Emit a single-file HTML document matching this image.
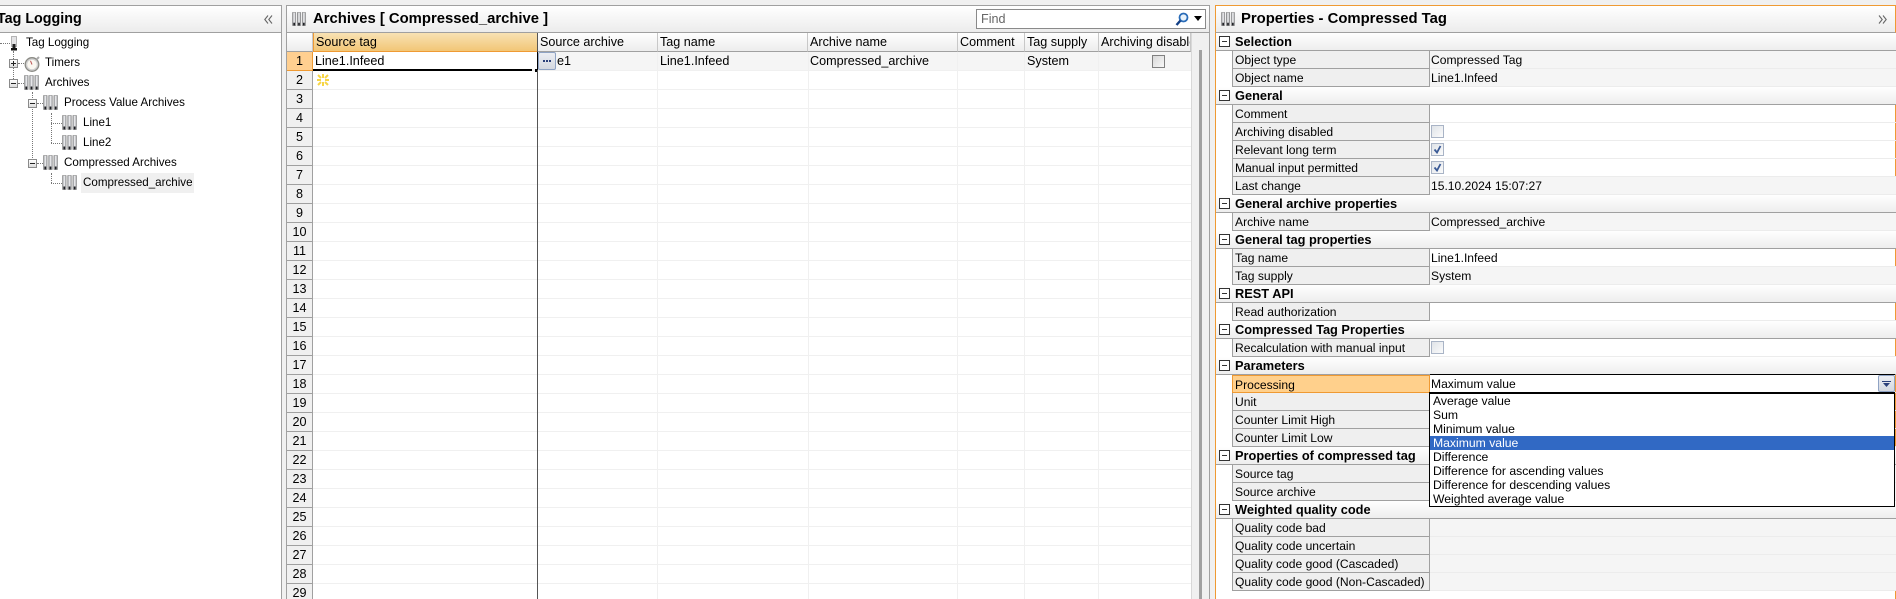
<!DOCTYPE html>
<html><head><meta charset="utf-8"><title>Tag Logging</title>
<style>
html,body{margin:0;padding:0;background:#f0f0f0;width:1896px;height:599px;overflow:hidden}
#r{position:relative;width:1896px;height:599px;overflow:hidden;font-family:"Liberation Sans",sans-serif;color:#000}
div,span,svg{box-sizing:border-box}
.a{position:absolute}
.t{position:absolute;white-space:nowrap;font-size:11.6px;line-height:20px;height:20px}
.hd{position:absolute;top:5px;height:28px;background:linear-gradient(#fff,#ececec);border:1px solid #a0a0a0}
.ttl{position:absolute;top:5px;height:28px;line-height:28px;font-weight:bold;font-size:14.85px;white-space:nowrap}
.g{position:absolute;font-size:12.6px;line-height:19px;height:19px;white-space:nowrap}
.ch{position:absolute;top:33px;height:19px;background:linear-gradient(#fff,#ededed);border-bottom:1px solid #a0a0a0;border-right:1px solid #c8c8c8;font-size:12.6px;line-height:18px;padding-left:3px;white-space:nowrap;overflow:hidden}
.rh{height:19px;background:#f0f0f0;border-bottom:1px solid #a0a0a0;border-right:1px solid #a0a0a0;text-align:center;font-size:12.6px;line-height:19px}
.vl{position:absolute;top:52px;height:547px;width:1px;background:#f0f0f0}
.pr{position:relative;height:18px;font-size:12.1px;line-height:18px;white-space:nowrap}
.gp{background:linear-gradient(#fff,#eeeeee);border-bottom:1px solid #a0a0a0;font-weight:bold;padding-left:19px;font-size:12.8px;line-height:17px}
.gp:before{content:"";position:absolute;left:3px;top:3px;width:9px;height:9px;border:1px solid #333;background:linear-gradient(90deg,#333,#333) center/5px 1px no-repeat #fff}
.lb{position:absolute;left:16px;top:0;width:198px;height:18px;background:#efefef;border-left:1px solid #a0a0a0;border-right:1px solid #a0a0a0;border-bottom:1px solid #a0a0a0;padding-left:2px;overflow:hidden}
.vv{position:absolute;left:214px;right:0;top:0;height:18px;border-bottom:1px solid #ececec;padding-left:1px}
.ro{background:#f5f5f5}
.cb{position:absolute;left:1px;top:2px;width:13px;height:13px;border:1px solid #a9b4c6;background:linear-gradient(135deg,#dfe3e8,#fbfbfb)}
.cb svg{position:absolute;left:1px;top:1px}
.dd{height:14px;line-height:15px;font-size:12.2px;padding-left:3px;white-space:nowrap}
.exp{position:absolute;width:9px;height:9px;border:1px solid #8a8a8a;background:linear-gradient(#fff,#dcdcdc)}
.exp:before{content:"";position:absolute;left:1px;top:3px;width:5px;height:1px;background:#222}
.plus:after{content:"";position:absolute;left:3px;top:1px;width:1px;height:5px;background:#222}
.dh{position:absolute;height:1px;border-top:1px dotted #777}
.dv{position:absolute;width:1px;border-left:1px dotted #777}
</style></head><body><div id="r">
<svg width="0" height="0" style="position:absolute"><defs>
<linearGradient id="bar" x1="0" x2="1" y1="0" y2="0"><stop offset="0" stop-color="#8c8e93"/><stop offset=".5" stop-color="#f4f4f6"/><stop offset="1" stop-color="#93959a"/></linearGradient>
<symbol id="arc" viewBox="0 0 15 15"><g><rect x="0.5" y="0.5" width="3.6" height="14" fill="url(#bar)" stroke="#777" stroke-width=".5"/><rect x="5.7" y="0.5" width="3.6" height="14" fill="url(#bar)" stroke="#777" stroke-width=".5"/><rect x="10.9" y="0.5" width="3.6" height="14" fill="url(#bar)" stroke="#777" stroke-width=".5"/><rect x="1.4" y="11.5" width="1.8" height="3" fill="#1f2024"/><rect x="6.6" y="11.5" width="1.8" height="3" fill="#1f2024"/><rect x="11.8" y="11.5" width="1.8" height="3" fill="#1f2024"/></g></symbol>
</defs></svg>

<!-- LEFT PANEL -->
<div class="a" style="left:-2px;top:5px;width:284px;height:594px;background:#fff;border:1px solid #a0a0a0;border-bottom:0"></div>
<div class="hd" style="left:-2px;width:284px"></div>
<div class="ttl" style="left:-3px;font-size:14.3px">Tag Logging</div>
<svg class="a" style="left:264px;top:15px" width="9" height="9" viewBox="0 0 9 9"><path d="M4 .5L.8 4.5 4 8.5M8 .5L4.8 4.5 8 8.5" fill="none" stroke="#666" stroke-width="1.1"/></svg>

<div class="dh" style="left:0;top:43px;width:10px"></div>
<div class="dv" style="left:13px;top:51px;height:28px"></div>
<div class="dv" style="left:32px;top:92px;height:72px"></div>
<div class="dv" style="left:51px;top:113px;height:30px"></div>
<div class="dh" style="left:51px;top:123px;width:11px"></div>
<div class="dh" style="left:51px;top:143px;width:11px"></div>
<div class="dv" style="left:51px;top:173px;height:10px"></div>
<div class="dh" style="left:51px;top:183px;width:11px"></div>
<div class="dh" style="left:18px;top:63px;width:6px"></div>
<div class="dh" style="left:18px;top:83px;width:6px"></div>
<div class="dh" style="left:37px;top:103px;width:6px"></div>
<div class="dh" style="left:37px;top:163px;width:6px"></div>

<svg class="a" style="left:10px;top:36px" width="8" height="15" viewBox="0 0 8 15"><rect x="1.5" y=".5" width="5" height="10" fill="#e4e4e6" stroke="#999" stroke-width=".7"/><rect x="2.5" y="8" width="3" height="4" fill="#222"/><path d="M1 12h6v2.5H1z" fill="#111"/></svg>
<div class="exp plus" style="left:9px;top:59px"></div>
<div class="exp" style="left:9px;top:79px"></div>
<div class="exp" style="left:28px;top:99px"></div>
<div class="exp" style="left:28px;top:159px"></div>
<svg class="a" style="left:24px;top:55px" width="17" height="17" viewBox="0 0 17 17"><circle cx="8" cy="9.5" r="6.8" fill="#cfcfcf" stroke="#8b8b85" stroke-width="1.3"/><circle cx="8" cy="9.5" r="4.8" fill="#faf7f0"/><path d="M8 9.5L6.5 5.8" stroke="#b55" stroke-width="1"/><path d="M12.5 4.5l2.5-2.5" stroke="#aaa" stroke-width="2"/></svg>
<svg class="a" style="left:24px;top:75px" width="15" height="15"><use href="#arc"/></svg>
<svg class="a" style="left:43px;top:95px" width="15" height="15"><use href="#arc"/></svg>
<svg class="a" style="left:62px;top:115px" width="15" height="15"><use href="#arc"/></svg>
<svg class="a" style="left:62px;top:135px" width="15" height="15"><use href="#arc"/></svg>
<svg class="a" style="left:43px;top:155px" width="15" height="15"><use href="#arc"/></svg>
<svg class="a" style="left:62px;top:175px" width="15" height="15"><use href="#arc"/></svg>
<div class="a" style="left:81px;top:173px;width:113px;height:20px;background:#f0f0f0"></div>
<div class="t" style="left:26px;top:33px">Tag Logging</div>
<div class="t" style="left:45px;top:53px">Timers</div>
<div class="t" style="left:45px;top:73px">Archives</div>
<div class="t" style="left:64px;top:93px">Process Value Archives</div>
<div class="t" style="left:83px;top:113px">Line1</div>
<div class="t" style="left:83px;top:133px">Line2</div>
<div class="t" style="left:64px;top:153px">Compressed Archives</div>
<div class="t" style="left:83px;top:173px">Compressed_archive</div>

<!-- MIDDLE PANEL -->
<div class="a" style="left:286px;top:5px;width:924px;height:594px;background:#f0f0f0;border:1px solid #a0a0a0;border-bottom:0"></div>
<div class="hd" style="left:286px;width:924px"></div>
<svg class="a" style="left:292px;top:12px" width="14" height="14"><use href="#arc"/></svg>
<div class="ttl" style="left:313px">Archives [ Compressed_archive ]</div>
<div class="a" style="left:976px;top:9px;width:230px;height:20px;background:#fff;border:1px solid #8a8a8a;font-size:12.6px;line-height:18px;padding-left:4px;color:#666">Find</div>
<svg class="a" style="left:1175px;top:12px" width="14" height="15" viewBox="0 0 14 15"><circle cx="8.5" cy="5.5" r="4" fill="#e8f2fb" stroke="#2a6cb8" stroke-width="1.8"/><path d="M5.5 8.5L1.5 13" stroke="#123f86" stroke-width="2.4"/></svg>
<svg class="a" style="left:1194px;top:16px" width="8" height="5"><path d="M0 0h8L4 5z" fill="#000"/></svg>

<div class="a" style="left:287px;top:33px;width:905px;height:566px;background:#fff"></div>
<div class="a" style="left:313px;top:52px;width:878px;height:547px;background:repeating-linear-gradient(to bottom,transparent 0,transparent 18px,#f0f0f0 18px,#f0f0f0 19px)"></div>
<div class="a" style="left:313px;top:52px;width:878px;height:18px;background:#f5f5f5"></div>
<div class="vl" style="left:657px"></div><div class="vl" style="left:808px"></div><div class="vl" style="left:957px"></div><div class="vl" style="left:1024px"></div><div class="vl" style="left:1098px"></div>
<div class="a" style="left:1191px;top:33px;height:566px;width:1px;background:#d8d8d8"></div>
<div class="a" style="left:1192px;top:33px;width:17px;height:566px;background:#f0f0f0"></div>
<div class="a" style="left:1199px;top:50px;width:3px;height:549px;background:#a0a0a0"></div>

<div class="ch" style="left:287px;width:26px"></div>
<div class="ch" style="left:313px;width:224px;background:linear-gradient(#f8e2b4,#f2c676);border-bottom:1px solid #ef9a33;border-right:0;border-left:1px solid #ef9a33;padding-left:2px">Source tag</div>
<div class="ch" style="left:537px;width:121px">Source archive</div>
<div class="ch" style="left:658px;width:150px;padding-left:2px">Tag name</div>
<div class="ch" style="left:808px;width:150px;padding-left:2px">Archive name</div>
<div class="ch" style="left:958px;width:67px;padding-left:2px">Comment</div>
<div class="ch" style="left:1025px;width:74px;padding-left:2px">Tag supply</div>
<div class="ch" style="left:1099px;width:92px;padding-left:2px">Archiving disabled</div>

<div class="a" style="left:287px;top:52px;width:26px;height:547px;overflow:hidden">
<div class="rh" style="background:#ffcf90;border-bottom:1px solid #ef9a33;border-right:1px solid #ef9a33">1</div>
<div class="rh">2</div><div class="rh">3</div><div class="rh">4</div><div class="rh">5</div><div class="rh">6</div><div class="rh">7</div><div class="rh">8</div><div class="rh">9</div><div class="rh">10</div><div class="rh">11</div><div class="rh">12</div><div class="rh">13</div><div class="rh">14</div><div class="rh">15</div><div class="rh">16</div><div class="rh">17</div><div class="rh">18</div><div class="rh">19</div><div class="rh">20</div><div class="rh">21</div><div class="rh">22</div><div class="rh">23</div><div class="rh">24</div><div class="rh">25</div><div class="rh">26</div><div class="rh">27</div><div class="rh">28</div><div class="rh">29</div>
</div>

<div class="a" style="left:313px;top:52px;width:224px;height:17px;background:#fff"></div>
<div class="g" style="left:315px;top:52px">Line1.Infeed</div>
<div class="a" style="left:313px;top:69px;width:219px;height:2px;background:#000"></div>
<div class="a" style="left:535px;top:69px;width:3px;height:3px;background:#000"></div>
<div class="a" style="left:537px;top:33px;height:566px;width:1px;background:#555"></div>
<div class="a" style="left:537px;top:52px;width:1px;height:18px;background:#000"></div>
<div class="a" style="left:538px;top:52px;width:18px;height:18px;background:linear-gradient(#eceef3,#d4d8e0);border:1px solid #8fa3c4;border-radius:2px"></div>
<div class="a" style="left:543px;top:60px;width:8px;height:2px;background:repeating-linear-gradient(90deg,#2a3f7a 0,#2a3f7a 2px,transparent 2px,transparent 3px)"></div>
<div class="g" style="left:557px;top:52px">e1</div>
<div class="g" style="left:660px;top:52px">Line1.Infeed</div>
<div class="g" style="left:810px;top:52px">Compressed_archive</div>
<div class="g" style="left:1027px;top:52px">System</div>
<div class="a" style="left:1152px;top:55px;width:13px;height:13px;border:1px solid #808080;background:linear-gradient(135deg,#d8d8d8,#f8f8f8)"></div>
<svg class="a" style="left:317px;top:74px" width="12" height="12" viewBox="0 0 12 12"><g stroke="#f6d545" stroke-width="2"><path d="M6 0v4M6 8v4M0 6h4M8 6h4"/><path d="M1 1l3 3M11 1L8 4M1 11l3-3M11 11L8 8"/></g></svg>

<!-- RIGHT PANEL -->
<div class="a" style="left:1215px;top:5px;width:681px;height:594px;background:#fff;border:1px solid #ef9a33;border-bottom:0"></div>
<div class="a" style="left:1215px;top:5px;width:681px;height:28px;background:linear-gradient(#fff,#ececec);border:1px solid #ef9a33;border-bottom:1px solid #a0a0a0"></div>
<svg class="a" style="left:1221px;top:12px" width="14" height="14"><use href="#arc"/></svg>
<div class="ttl" style="left:1241px">Properties - Compressed Tag</div>
<svg class="a" style="left:1878px;top:15px" width="9" height="9" viewBox="0 0 9 9"><path d="M1 .5L4.2 4.5 1 8.5M5 .5L8.2 4.5 5 8.5" fill="none" stroke="#666" stroke-width="1.1"/></svg>

<div class="a" style="left:1216px;top:33px;width:680px;height:566px;overflow:hidden">
<div class="pr gp">Selection</div>
<div class="pr"><div class="lb">Object type</div><div class="vv ro">Compressed Tag</div></div>
<div class="pr"><div class="lb">Object name</div><div class="vv ro">Line1.Infeed</div></div>
<div class="pr gp">General</div>
<div class="pr"><div class="lb">Comment</div><div class="vv"></div></div>
<div class="pr"><div class="lb">Archiving disabled</div><div class="vv"><div class="cb"></div></div></div>
<div class="pr"><div class="lb">Relevant long term</div><div class="vv"><div class="cb"><svg width="9" height="9" viewBox="0 0 9 9"><path d="M1.5 4.5L4 7.5 7.5 1" fill="none" stroke="#3a5a96" stroke-width="1.8"/></svg></div></div></div>
<div class="pr"><div class="lb">Manual input permitted</div><div class="vv"><div class="cb"><svg width="9" height="9" viewBox="0 0 9 9"><path d="M1.5 4.5L4 7.5 7.5 1" fill="none" stroke="#3a5a96" stroke-width="1.8"/></svg></div></div></div>
<div class="pr"><div class="lb">Last change</div><div class="vv ro">15.10.2024 15:07:27</div></div>
<div class="pr gp">General archive properties</div>
<div class="pr"><div class="lb">Archive name</div><div class="vv ro">Compressed_archive</div></div>
<div class="pr gp">General tag properties</div>
<div class="pr"><div class="lb">Tag name</div><div class="vv">Line1.Infeed</div></div>
<div class="pr"><div class="lb">Tag supply</div><div class="vv ro">System</div></div>
<div class="pr gp">REST API</div>
<div class="pr"><div class="lb">Read authorization</div><div class="vv"></div></div>
<div class="pr gp">Compressed Tag Properties</div>
<div class="pr"><div class="lb">Recalculation with manual input</div><div class="vv"><div class="cb"></div></div></div>
<div class="pr gp">Parameters</div>
<div class="pr"><div class="lb" style="background:#ffd08c;border:1px solid #ef9a33;border-top:1px solid #ef9a33">Processing</div><div class="vv">Maximum value</div></div>
<div class="pr"><div class="lb">Unit</div><div class="vv"></div></div>
<div class="pr"><div class="lb">Counter Limit High</div><div class="vv"></div></div>
<div class="pr"><div class="lb">Counter Limit Low</div><div class="vv"></div></div>
<div class="pr gp">Properties of compressed tag</div>
<div class="pr"><div class="lb">Source tag</div><div class="vv ro"></div></div>
<div class="pr"><div class="lb">Source archive</div><div class="vv ro"></div></div>
<div class="pr gp">Weighted quality code</div>
<div class="pr"><div class="lb">Quality code bad</div><div class="vv ro"></div></div>
<div class="pr"><div class="lb">Quality code uncertain</div><div class="vv ro"></div></div>
<div class="pr"><div class="lb">Quality code good (Cascaded)</div><div class="vv ro"></div></div>
<div class="pr"><div class="lb">Quality code good (Non-Cascaded)</div><div class="vv ro"></div></div>
</div>

<!-- Processing editor + dropdown -->
<div class="a" style="left:1430px;top:374px;width:465px;height:1px;background:#000"></div>
<div class="a" style="left:1878px;top:375px;width:17px;height:17px;background:linear-gradient(#eceef3,#d4d8e0);border:1px solid #8fa3c4;border-radius:2px"></div>
<svg class="a" style="left:1882px;top:381px" width="9" height="6"><path d="M0 0h9v1H0zM1 2h7L4.5 6z" fill="#2a3f7a"/></svg>
<div class="a" style="left:1429px;top:392px;width:466px;height:115px;background:#fff;border:1px solid #000;border-top:2px solid #000">
<div class="dd">Average value</div>
<div class="dd">Sum</div>
<div class="dd">Minimum value</div>
<div class="dd" style="background:#3169c4;color:#fff">Maximum value</div>
<div class="dd">Difference</div>
<div class="dd">Difference for ascending values</div>
<div class="dd">Difference for descending values</div>
<div class="dd">Weighted average value</div>
</div>
</div></body></html>
